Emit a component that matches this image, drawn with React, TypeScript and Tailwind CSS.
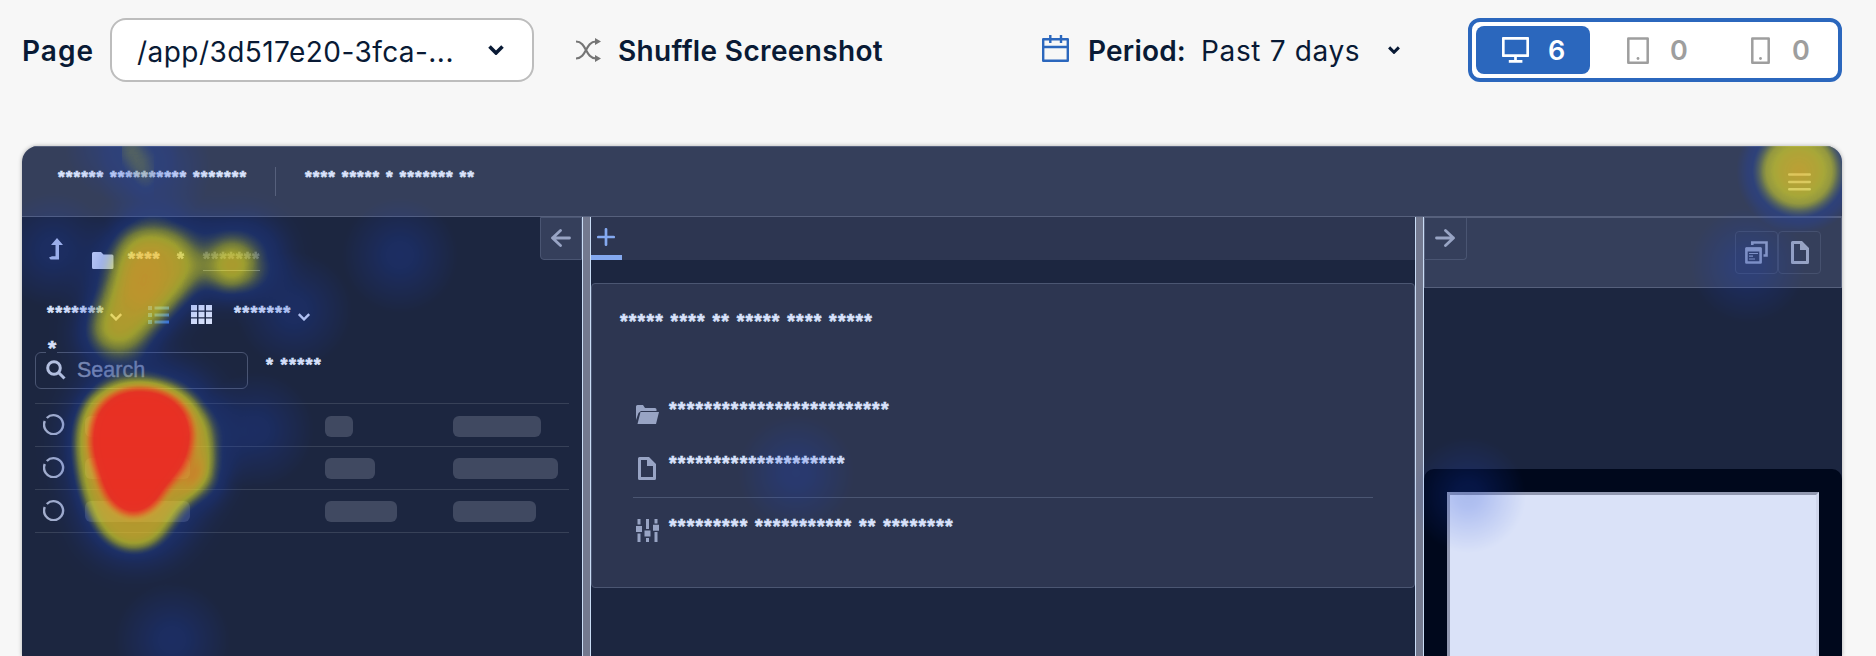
import React from "react";

const ui = "font-['Inter','Liberation_Sans',sans-serif]";

function Chevron({ className, stroke = 3 }: { className: string; stroke?: number }) {
  return (
    <svg viewBox="0 0 16 10" className={className} fill="none" stroke="currentColor" strokeWidth={stroke}>
      <path d="M1.5 1.5 8 8l6.5-6.5" />
    </svg>
  );
}

function Shuffle() {
  return (
    <svg viewBox="0 0 25 24" className="h-6 w-[25px] shrink-0 text-[#757575]" fill="none" stroke="currentColor" strokeWidth="2.200">
      <path d="M0 3.5C11 3.500 9 20.500 20 20.500M0 20.500C11 20.500 9 3.500 20 3.500" />
      <path d="M19 0 25 3.500 19 7ZM19 17l6 3.500-6 3.500Z" fill="currentColor" stroke="none" />
    </svg>
  );
}

function Calendar() {
  return (
    <svg viewBox="0 0 27 27" className="-mt-[3px] h-[27px] w-[27px] shrink-0 text-[#2b67bd]" fill="none" stroke="currentColor" strokeWidth="2.400" strokeLinejoin="round">
      <path d="M1.200 4.200h24.600v21.600H1.200ZM1.200 12h24.600M8.300 0v8M19 0v8" />
    </svg>
  );
}

function Monitor() {
  return (
    <svg viewBox="0 0 27 26" className="h-[26px] w-[27px]" fill="none" stroke="currentColor" strokeWidth="2.700" strokeLinejoin="round">
      <path d="M1.300 1.300h24.400v17.400H1.300ZM13.500 19v5M6.800 24.300h13.600" />
    </svg>
  );
}

function Device({ w, className }: { w: number; className: string }) {
  return (
    <svg viewBox={`0 0 ${w} 27`} className={className} fill="none" stroke="currentColor" strokeWidth="2.500" strokeLinejoin="round">
      <rect x="1.300" y="1.600" width={w - 2.6} height="24.100" />
      <circle cx={w / 2} cy="21.500" r="1.400" fill="currentColor" stroke="none" />
    </svg>
  );
}

function Arrow({ flip = false }: { flip?: boolean }) {
  return (
    <svg viewBox="0 0 20 18" className={flip ? "-mt-px h-[18px] w-5 rotate-180" : "-mt-px h-[18px] w-5"} fill="none" stroke="#98a4c4" strokeWidth="2.800" strokeLinecap="round" strokeLinejoin="round">
      <path d="M1.500 9h17M10.500 1.500 18.500 9l-8 7.500" />
    </svg>
  );
}

function FileIcon({ className }: { className: string }) {
  return (
    <svg viewBox="0 0 18 23" className={className}>
      <path fill="#98a4c4" fillRule="evenodd" d="M1.500 0H11l7 7v14.500A1.500 1.500 0 0 1 16.500 23h-15A1.500 1.500 0 0 1 0 21.500v-20A1.500 1.500 0 0 1 1.500 0ZM3 3v17h12V9H9V3Z" />
    </svg>
  );
}

function WindowsIcon() {
  return (
    <svg viewBox="0 0 23 23" className="h-[23px] w-[23px]" fill="none" stroke="#98a4c4">
      <path d="M7.300 4V1.500h14.200v13h-3" strokeWidth="2.600" />
      <path d="M1.400 7.500h14.200v14H1.400Z" strokeWidth="2.600" strokeLinejoin="round" />
      <path d="M1 8.500h15" strokeWidth="4" />
      <path d="M4 12.500h9M4 15.200h4M4 18h6" strokeWidth="1.200" />
    </svg>
  );
}

function Stars({ children, className }: { children: string; className: string }) {
  return (
    <span className={`block whitespace-pre leading-6 text-[#d9e2fb] [-webkit-text-stroke:0.6px_#d9e2fb] ${className}`}>
      {children}
    </span>
  );
}

function SkeletonRow({ name, size, date, offset }: { name: string; size: string; date: string; offset: string }) {
  const bar = "h-[21px] rounded-md bg-[#404961]";
  return (
    <div className="flex h-[43px] border-b border-[#374158] pt-[9px]">
      <svg viewBox="0 0 22 22" className="mr-[20px] ml-2 h-[22px] w-[22px] shrink-0" fill="none" stroke="#a3aecd" strokeWidth="2.400">
        <path d="M3.800 5a9.500 9.500 0 1 1-2 3" />
      </svg>
      <div className={`flex grow ${offset}`}>
        <div className="w-[240px] shrink-0"><div className={`${bar} ${name}`} /></div>
        <div className="w-32 shrink-0"><div className={`${bar} ${size}`} /></div>
        <div className={`${bar} ${date}`} />
      </div>
    </div>
  );
}

function LeftPanel() {
  return (
    <section className="flex w-[560px] shrink-0 flex-col bg-[#1c2640]">
      <div className="flex h-[80px]">
        <svg viewBox="0 0 14 22" className="mt-[21px] ml-[27px] h-[22px] w-[14px] shrink-0">
          <path fill="#c0cdf3" d="M8 0l6 7h-4v14.500H1.500L0 19.500 3 18.300h3.500V7H2Z" />
        </svg>
        <svg viewBox="0 0 22 17" className="mt-[35px] ml-[29px] h-[17px] w-[22px] shrink-0">
          <path fill="#d9e2fb" d="M1.500 0H9l2.500 2.500H20A1.500 1.500 0 0 1 21.500 4v11.500A1.500 1.500 0 0 1 20 17H1.500A1.500 1.500 0 0 1 0 15.500v-14A1.500 1.500 0 0 1 1.500 0Z" />
        </svg>
        <Stars className="mt-[30px] ml-[14px] w-[49px] text-[18px] tracking-[1.200px]">****</Stars>
        <Stars className="mt-[30px] w-[26px] text-[18px] opacity-85">*</Stars>
        <div className="mt-[30px] h-6 border-b border-[#6d7790]">
          <Stars className="text-[18px] tracking-[1.200px] opacity-40">*******</Stars>
        </div>
        <div className="ml-auto flex h-[43px] w-[42px] items-center justify-center rounded-bl border border-[#4a5572] bg-[#353f5b]">
          <Arrow flip />
        </div>
      </div>
      <div className="flex h-[46px] pl-[25px]">
        <Stars className="mt-1 w-[62px] text-[18px] tracking-[1.200px]">*******</Stars>
        <Chevron className="mt-4 h-2 w-[14px] shrink-0 text-[#d9e2fb]" stroke={3} />
        <svg viewBox="0 0 21 18" className="mt-[9px] ml-[25px] h-[18px] w-[21px] shrink-0" fill="#3f83ea">
          <path d="M0 0h4v4H0zM6.500.5H21v3H6.500zM0 7h4v4H0zM6.500 7.500H21v3H6.500zM0 14h4v4H0zM6.500 14.500H21v3H6.500z" />
        </svg>
        <svg viewBox="0 0 21 19" className="mt-2 ml-[22px] h-[19px] w-[21px] shrink-0" fill="#d9e2fb">
          <path d="M0 0h6v5.500H0zM7.500 0h6v5.500h-6zM15 0h6v5.500h-6zM0 6.700h6v5.500H0zM7.500 6.700h6v5.500h-6zM15 6.700h6v5.500h-6zM0 13.500h6V19H0zM7.500 13.500h6V19h-6zM15 13.500h6V19h-6z" />
        </svg>
        <Stars className="mt-1 ml-[22px] w-[63px] text-[18px] tracking-[1.200px]">*******</Stars>
        <Chevron className="mt-4 h-2 w-[14px] shrink-0 text-[#d9e2fb]" stroke={3} />
      </div>
      <div className="flex h-[60px] pl-[13px]">
        <fieldset className="-mt-[7px] h-[53px] w-[213px] rounded-md border border-[#4a5572] pl-[10px]">
          <legend className="px-0 pb-[8px]">
            <Stars className="w-[11px] pl-0.5 text-[21px]">*</Stars>
          </legend>
          <div className="-mt-[10px] flex items-center">
            <svg viewBox="0 0 20 20" className="h-5 w-5" fill="none" stroke="#b3bfdf" strokeWidth="3">
              <circle cx="8" cy="8" r="6.300" />
              <path d="m12.500 12.500 6 6" />
            </svg>
            <span className="pl-[11px] font-['Liberation_Sans',sans-serif] text-[21.500px] leading-6 font-normal text-[#8590ac] [-webkit-text-stroke:0.4px_#8590ac]">Search</span>
          </div>
        </fieldset>
        <Stars className="mt-[10px] ml-[18px] text-[18px] tracking-[1.300px]">* *****</Stars>
      </div>
      <div className="mr-[13px] ml-[13px] border-t border-[#374158]">
        <SkeletonRow name="w-[105px]" size="w-7" date="w-[88px]" offset="pt-[3px]" />
        <SkeletonRow name="w-[105px]" size="w-[50px]" date="w-[105px]" offset="pt-[2px]" />
        <SkeletonRow name="w-[105px]" size="w-[72px]" date="w-[83px]" offset="pt-[2px]" />
      </div>
    </section>
  );
}

function Splitter() {
  return <div className="w-[9px] shrink-0 border-x border-[#c9dcf5] bg-[#73798f]" />;
}

function MiddlePanel() {
  return (
    <section className="flex w-[824px] shrink-0 flex-col bg-[#1c2640]">
      <div className="flex h-[43px] bg-[#2d3651]">
        <div className="flex h-full w-[31px] justify-center border-b-5 border-[#84a9f0] pt-[11px] pr-0.5">
          <svg viewBox="0 0 18 18" className="h-[18px] w-[18px]" stroke="#84a9f0" strokeWidth="2.700" strokeLinecap="round">
            <path d="M9 1.300v15.400M1.300 9h15.400" />
          </svg>
        </div>
      </div>
      <div className="mt-[23px] h-[305px] rounded-sm border border-[#4b5672] bg-[#2d3651] pr-[41px] pl-[28px]">
        <Stars className="pt-[25px] text-[19.500px] tracking-[1.210px]">***** **** ** ***** **** *****</Stars>
        <div className="mt-[64px] ml-[13px]">
          <div className="flex h-[54px] border-b border-transparent">
            <svg viewBox="0 0 23 19" className="mt-[8px] ml-[3px] h-[19px] w-[23px] shrink-0" fill="#98a4c4">
              <path d="M0 15V1.500Q0 0 1.500 0H7l2 3h10q1.500 0 1.500 1.500V6H5L2.500 8Z" />
              <path d="M4.500 7H23l-3 12H1.500Z" />
            </svg>
            <Stars className="ml-[10px] text-[19.500px] tracking-[1.240px]">*************************</Stars>
          </div>
          <div className="flex h-[47px] border-b border-[#4b5672]">
            <FileIcon className="mt-[6px] ml-[5px] h-[23px] w-[18px] shrink-0" />
            <Stars className="ml-[13px] text-[19.500px] tracking-[1.240px]">********************</Stars>
          </div>
          <div className="flex pt-[16px]">
            <svg viewBox="0 0 23 23" className="mt-[5px] ml-[3px] h-[23px] w-[23px] shrink-0" fill="#98a4c4">
              <path d="M1.500 0h3v5.500h-3zM0 7h6v6H0zM1.500 14.500h3V23h-3zM10 0h3v10h-3zM8.500 11.500h6v6h-6zM10 19h3v4h-3zM18.500 0h3v4.500h-3zM17 5.700h6v6h-6zM18.500 13h3v10h-3z" />
            </svg>
            <Stars className="ml-[10px] text-[19.500px] tracking-[1.240px]">********* *********** ** ********</Stars>
          </div>
        </div>
      </div>
    </section>
  );
}

function RightPanel() {
  const button = "flex h-[43px] w-[43px] items-center justify-center rounded-sm border border-[#46516e]";
  return (
    <section className="flex grow flex-col bg-[#1c2640]">
      <div className="flex h-[71px] justify-between border border-[#56607c] bg-[#353f5b] pr-[20px]">
        <div className="-ml-px flex h-[42px] w-[43px] items-center justify-center rounded-br border-r border-b border-[#4a5572]">
          <Arrow />
        </div>
        <div className="flex pt-[13px]">
          <div className={button}><WindowsIcon /></div>
          <div className={button}><FileIcon className="h-[23px] w-[18px]" /></div>
        </div>
      </div>
      <div className="mt-[181px] grow rounded-t-[10px] bg-[#00081c] px-[23px] pt-[23px]">
        <div className="h-full border-t-3 border-r-3 border-l-3 border-t-[#9198b0] border-r-[#d0d7ed] border-l-[#9198b0] bg-[#dae2f8]" />
      </div>
    </section>
  );
}

const coldSpots = [
  [132, 22], [100, -2], [32, 104], [378, 109], [272, 164], [234, 284], [150, 494], [774, 327], [1726, 119], [1446, 349],
];

function Heatmap() {
  return (
    <svg viewBox="0 0 1820 510" className="pointer-events-none absolute inset-0 h-full w-full">
      <defs>
        <radialGradient id="cold">
          <stop offset="0" stopColor="#000" stopOpacity=".24" />
          <stop offset=".2" stopColor="#000" stopOpacity=".22" />
          <stop offset=".6" stopColor="#000" stopOpacity=".11" />
          <stop offset="1" stopColor="#000" stopOpacity="0" />
        </radialGradient>
        <radialGradient id="hot">
          <stop offset="0" stopColor="#000" stopOpacity=".68" />
          <stop offset=".3" stopColor="#000" stopOpacity=".63" />
          <stop offset=".52" stopColor="#000" stopOpacity=".56" />
          <stop offset=".74" stopColor="#000" stopOpacity=".3" />
          <stop offset="1" stopColor="#000" stopOpacity="0" />
        </radialGradient>
        <filter id="b4" x="-50%" y="-50%" width="200%" height="200%"><feGaussianBlur stdDeviation="5.5" /></filter>
        <filter id="b6" x="-50%" y="-50%" width="200%" height="200%"><feGaussianBlur stdDeviation="6.5" /></filter>
        <filter id="b11" x="-50%" y="-50%" width="200%" height="200%"><feGaussianBlur stdDeviation="11" /></filter>
        <filter id="b14" x="-50%" y="-50%" width="200%" height="200%"><feGaussianBlur stdDeviation="14" /></filter>
        <filter id="ramp" filterUnits="userSpaceOnUse" x="0" y="0" width="1820" height="510" colorInterpolationFilters="sRGB">
          <feColorMatrix values="0 0 0 1 0  0 0 0 1 0  0 0 0 1 0  0 0 0 1 0" />
          <feComponentTransfer>
            <feFuncR type="table" tableValues=".1 .1 .1 .12 .42 .72 .9 .96 .95 .92 .92" />
            <feFuncG type="table" tableValues=".27 .27 .27 .28 .52 .76 .88 .74 .42 .2 .19" />
            <feFuncB type="table" tableValues=".85 .85 .85 .75 .46 .22 .15 .15 .14 .14 .14" />
            <feFuncA type="table" tableValues="0 .1 .2 .3 .4 .53 .65 .74 .88 .97 .99" />
          </feComponentTransfer>
        </filter>
      </defs>
      <g filter="url(#ramp)">
        {coldSpots.map(([x, y]) => (
          <circle key={`${x}-${y}`} cx={x} cy={y} r="58" fill="url(#cold)" />
        ))}
        <circle cx="1777" cy="25" r="63" fill="url(#hot)" />
        <path d="M108 0L124 38" stroke="#000" strokeWidth="22" strokeLinecap="round" opacity=".14" filter="url(#b6)" />
        <g filter="url(#b14)" opacity=".3">
          <path d="M126 60C165 62 180 78 210 70C248 64 268 90 264 120C256 154 205 158 180 150C150 174 135 218 94 228C54 224 44 190 62 160C74 110 76 68 126 60Z" />
          <path d="M118 214C180 210 208 250 208 300C208 346 182 366 167 390C149 426 85 432 62 390C48 354 41 330 42 290C46 240 75 213 118 214Z" />
        </g>
        <g filter="url(#b11)" opacity=".5">
          <path d="M128 80C156 80 180 100 178 124C168 154 140 168 122 194C108 214 74 210 69 186C72 160 88 140 90 115C94 92 110 80 128 80Z" />
          <circle cx="210" cy="119" r="26" />
        </g>
        <ellipse cx="122" cy="134" rx="22" ry="34" transform="rotate(15 122 134)" opacity=".16" filter="url(#b11)" />
        <circle cx="180" cy="332" r="20" opacity=".3" filter="url(#b11)" />
        <path filter="url(#b6)" opacity=".52" d="M118 232C162 232 191 262 191 300C192 325 180 344 165 358C146 378 142 404 110 404C78 402 64 365 57 335C51 305 49 277 65 253C80 237 98 232 118 232Z" />
        <path filter="url(#b4)" d="M118 243C151 243 170 264 170 290C169 318 152 332 142 346C133 361 123 368 110 368C93 366 82 351 76 328C68 306 66 288 74 268C83 251 98 243 118 243Z" />
      </g>
    </svg>
  );
}

export default function App() {
  return (
    <main className="h-[656px] w-[1876px] overflow-hidden bg-[#f7f7f7] pl-[22px] text-[#091a35]">
      <div className={`flex h-[100px] w-[1820px] items-center ${ui} text-[27px]`}>
        <span className="w-[88px] shrink-0 pt-[2px] text-[28px] font-semibold tracking-[1px]">Page</span>
        <div className="flex h-16 w-[424px] shrink-0 items-center justify-between rounded-2xl border-2 border-[#bdbdbd] bg-white pr-[28px] pl-[25px]">
          <span className="pt-[3px] text-[28px] tracking-[0.450px] whitespace-nowrap">/app/3d517e20-3fca-...</span>
          <Chevron className="h-[10px] w-4" stroke={3.6} />
        </div>
        <div className="ml-[42px] flex shrink-0 items-center">
          <Shuffle />
          <span className="ml-[17px] pt-[2px] text-[28px] font-semibold tracking-[0.350px] whitespace-nowrap">Shuffle Screenshot</span>
        </div>
        <div className="ml-auto flex shrink-0 items-center whitespace-nowrap">
          <Calendar />
          <span className="ml-[19px] w-[113px] pt-[2px] text-[28px] font-semibold tracking-[0.200px]">Period:</span>
          <span className="w-[187px] pt-[2px] text-[28px] tracking-[0.650px]">Past 7 days</span>
          <Chevron className="mr-[68px] h-2 w-3" stroke={4} />
        </div>
        <div className="flex h-16 w-[374px] shrink-0 rounded-xl border-4 border-[#2b67bd] bg-white p-1 font-semibold text-[#9e9e9e]">
          <div className="flex w-[114px] items-center rounded-lg bg-[#2b67bd] pl-[26px] text-white">
            <Monitor />
            <span className="ml-[19px] pt-[2px]">6</span>
          </div>
          <div className="flex w-[122px] items-center pl-[37px]">
            <Device w={22} className="h-[27px] w-[22px]" />
            <span className="ml-[21px] pt-[2px]">0</span>
          </div>
          <div className="flex items-center pl-[39px]">
            <Device w={19} className="h-[27px] w-[19px]" />
            <span className="ml-[22px] pt-[2px]">0</span>
          </div>
        </div>
      </div>
      <div className="relative mt-[46px] flex h-[510px] w-[1820px] flex-col overflow-hidden rounded-t-2xl font-['Liberation_Sans',sans-serif] font-bold shadow-[0_0_4px_rgba(0,0,0,0.3)]">
        <header className="flex h-[71px] shrink-0 border-t border-b border-[#56607c] bg-[#353f5b] pt-[18px]">
          <Stars className="ml-[36px] w-[217px] text-[17.200px] tracking-[1.030px]">****** ********** *******</Stars>
          <div className="mt-0.5 h-[29px] w-px bg-[#56607c]" />
          <Stars className="ml-[29px] text-[17.200px] tracking-[1.030px]">**** ***** * ******* **</Stars>
          <svg viewBox="0 0 23 18" className="mt-[8px] mr-[31px] ml-auto h-[18px] w-[23px]" stroke="#b4bfdd" strokeWidth="2.600" strokeLinecap="round">
            <path d="M1.300 1.500h20.400M1.300 9h20.400M1.300 16.200h20.400" />
          </svg>
        </header>
        <div className="flex grow">
          <LeftPanel />
          <Splitter />
          <MiddlePanel />
          <Splitter />
          <RightPanel />
        </div>
        <Heatmap />
      </div>
    </main>
  );
}
